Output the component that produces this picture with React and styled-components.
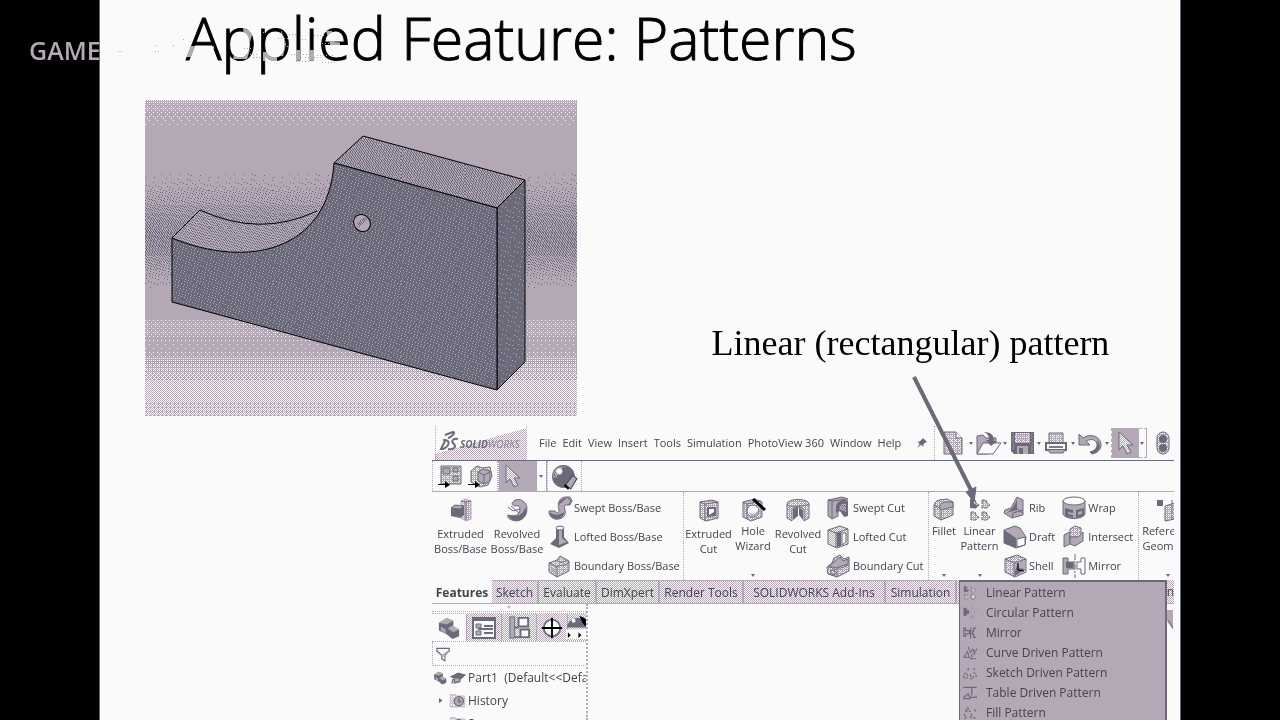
import React from "react";
import styled, { createGlobalStyle, css } from "styled-components";

const S = "#6a6a7a";
const M = "#b4a8b6";
const W = "#fafafa";
const K = "#000000";
const INK = "#45434f";
const MIX = "url(#mw32)";
const SOFT = "url(#mw20)";

const Global = createGlobalStyle`
  *, *::before, *::after { box-sizing: border-box; }
  body { margin: 0; background: #000; font-family: "Open Sans", "Noto Sans", sans-serif; }
  button, input { font: inherit; color: inherit; }
`;

const checker = css`
  background: repeating-conic-gradient(${M} 0 25%, ${W} 0 50%) 0 0 / 2px 2px;
`;

/* ---------- slide ---------- */

const Stage = styled.main`
  display: grid;
  grid-template-columns: 99px minmax(0, 1fr) 99px;
  height: 100vh;
  overflow: hidden;
  position: relative;
`;

const Slide = styled.section`
  grid-column: 2;
  background: ${W};
  display: flex;
  flex-direction: column;
  position: relative;
  overflow: hidden;
  border: 1px solid ${S};
  border-width: 0 1px;
`;

const Title = styled.h1`
  margin: 0;
  height: 100px;
  flex: none;
  padding-left: 86px;
  font-size: 59px;
  line-height: 74px;
  font-weight: 300;
  -webkit-text-stroke: 1px #000;
  color: #000;
  white-space: nowrap;
`;

const Watermark = styled.div`
  position: absolute;
  left: 29px;
  top: 32px;
  font-size: 25px;
  line-height: 36px;
  font-weight: 600;
  color: ${M};
`;

const WatermarkTrace = styled.svg`
  position: absolute;
  left: 0;
  top: 26px;
  mix-blend-mode: ${(p) => (p.$blend ? "lighten" : "normal")};
`;

const Figure = styled.div`
  display: flex;
  align-items: flex-end;
  padding-left: 45px;
  flex: none;
`;

const Render = styled.svg`
  display: block;
  flex: none;
`;

const Caption = styled.p`
  margin: 0 0 49px;
  flex: 1;
  padding-left: 64px;
  text-align: center;
  font-family: "Liberation Serif", serif;
  font-size: 36px;
  line-height: 48px;
  color: #000;
  white-space: nowrap;
`;

const Arrow = styled.svg`
  position: absolute;
  left: 806px;
  top: 370px;
  z-index: 5;
  pointer-events: none;
`;

/* ---------- application window ---------- */

const AppWindow = styled.div`
  margin: 10px 6px 0 332px;
  flex: 1;
  min-height: 0;
  display: flex;
  flex-direction: column;
  overflow: hidden;
  font-size: 12px;
  line-height: 16px;
  color: ${INK};
  white-space: nowrap;
`;

const MenuBar = styled.header`
  display: flex;
  height: 35px;
  flex: none;
  border-bottom: 1px solid ${S};
  font-size: 11px;
`;

const Logo = styled.svg`
  flex: none;
  margin-left: 3px;
`;

const Menus = styled.nav`
  display: flex;
  align-items: center;
  gap: 6px;
  padding-left: 12px;
  width: 383px;
  flex: none;
`;

const Plain = styled.button`
  border: 0;
  background: none;
  padding: 0;
  display: flex;
  align-items: center;
  justify-content: center;
  white-space: nowrap;
  flex: none;
`;

const PinButton = styled(Plain)`
  width: 24px;
`;

const QuickBar = styled.div`
  display: flex;
  align-items: center;
  flex: 1;
  min-width: 0;
  overflow: hidden;
  border-left: 1px dotted ${M};
  padding-left: 6px;
`;

const QuickButton = styled(Plain)`
  width: 34px;
  height: 30px;
  justify-content: flex-start;
  ${(p) =>
    p.$on &&
    css`
      width: 36px;
      margin-right: 6px;
      border: 1px dashed ${M};
      background: linear-gradient(to right, ${M} 27px, ${W} 27px);
    `}
`;

const Caret = styled.span`
  border: 2px solid transparent;
  border-top: 3px solid ${S};
  border-bottom: 0;
  margin-left: ${(p) => p.$gap || 0}px;
`;

const ToolRow = styled.div`
  display: flex;
  height: 31px;
  flex: none;
  border-bottom: 1px solid ${M};
`;

const ToolGroup = styled.div`
  display: flex;
  width: ${(p) => p.$w}px;
  flex: none;
  align-items: center;
  justify-content: ${(p) => (p.$on ? "flex-start" : "center")};
  gap: 4px;
  border: 1px dotted ${M};
  border-width: 0 1px;
  ${(p) => p.$on && css`background: linear-gradient(to right, ${M} 38px, ${W} 38px);`}
`;

const Ribbon = styled.div`
  display: flex;
  height: 88px;
  flex: none;
  position: relative;
  z-index: 2;
  font-size: 11px;
`;

const Group = styled.div`
  display: flex;
  flex: none;
  width: ${(p) => p.$w}px;
  border-right: 1px dotted ${M};
`;

const LastGroup = styled(Group)`
  flex: 1;
  width: auto;
  min-width: 0;
  overflow: hidden;
  border: 0;
  padding-left: 3px;
`;

const BigButton = styled.button`
  position: relative;
  width: ${(p) => p.$w}px;
  flex: none;
  height: 88px;
  border: 0;
  padding: 5px 0 0;
  background: none;
  display: flex;
  flex-direction: column;
  align-items: center;
  gap: ${(p) => (p.$menu ? 0 : 3)}px;
  line-height: 15px;
`;

const BigCaret = styled(Caret)`
  position: absolute;
  bottom: 3px;
`;

const Stack = styled.div`
  display: flex;
  flex-direction: column;
  padding-top: 1px;
  margin-left: ${(p) => p.$gap}px;
`;

const SmallButton = styled(Plain)`
  height: 29px;
  justify-content: flex-start;
  gap: 1px;
`;

const MenuAnchor = styled.div`
  position: relative;
`;

const Dropdown = styled.ul`
  position: absolute;
  top: 88px;
  left: 0;
  width: 208px;
  margin: 0;
  padding: 1px 0 2px;
  list-style: none;
  background: ${M};
  border: 2px solid ${S};
  border-left-width: 1px;
  z-index: 3;
  font-size: 12px;
`;

const DropItem = styled.button`
  display: flex;
  align-items: center;
  width: 100%;
  height: 20px;
  border: 0;
  padding: 0 0 0 2px;
  gap: 8px;
  background: none;
`;

const Tabs = styled.div`
  display: flex;
  height: 24px;
  flex: none;
  border-bottom: 1px solid ${M};
`;

const Tab = styled.button`
  width: ${(p) => p.$w}px;
  flex: none;
  padding: 2px 0 0;
  border: 0;
  background: none;
  text-align: center;
  ${(p) =>
    p.$on
      ? css`
          font-weight: 700;
        `
      : css`
          ${checker}
          border-top: 1px solid ${M};
          border-right: 2px solid ${M};
        `}
`;

const TabRest = styled.div`
  flex: 1;
  padding-top: 4px;
  text-align: right;
  ${checker}
`;

const Body = styled.div`
  display: flex;
  justify-content: space-between;
  flex: 1;
  min-height: 0;
`;

const Sidebar = styled.aside`
  width: 156px;
  overflow: hidden;
  border-right: 2px dotted ${M};
`;

const Splitter = styled.div`
  height: 8px;
  border-bottom: 1px dotted ${M};
  display: flex;
  justify-content: center;
`;

const PanelTabs = styled.div`
  display: flex;
  height: 29px;
  margin-top: 1px;
  border: 1px dotted ${M};
  border-width: 1px 0;
`;

const PanelTab = styled(Plain)`
  width: ${(p) => p.$w || 35}px;
  ${(p) => !p.$on && checker}
  border-right: 1px solid ${M};
`;

const Filter = styled.label`
  display: flex;
  align-items: center;
  height: 24px;
  padding-left: 2px;
  border: 1px dotted ${M};
  border-width: 0 0 1px 1px;
`;

const FilterInput = styled.input`
  border: 0;
  background: none;
  width: 120px;
  height: 20px;
  outline: 0;
`;

const Tree = styled.ul`
  margin: 0;
  padding: 0;
  list-style: none;
`;

const TreeRow = styled.li`
  display: flex;
  align-items: center;
  height: 23px;
  gap: 2px;
  white-space: pre;
  padding-left: ${(p) => (p.$nested ? 7 : 1)}px;
`;

const Twisty = styled.span`
  width: 5px;
  height: 5px;
  margin-right: 3px;
  border: 2px solid transparent;
  border-left: 3px solid ${(p) => (p.$hidden ? "transparent" : S)};
`;

/* ---------- dither tones ---------- */

function bayer(x, y) {
  let v = 0;
  for (let b = 0; b < 3; b++) {
    const xb = (x >> b) & 1;
    const yb = (y >> b) & 1;
    v = v * 4 + ((xb ^ yb) * 2 + yb);
  }
  return v;
}

function gradientNoise(x, y) {
  const a = 0.06711056 * x + 0.00583715 * y;
  const b = 52.9829189 * (a - Math.floor(a));
  return 64 * (b - Math.floor(b));
}

function Tone({ id, base, dot, level, size = 8, noise = bayer }) {
  let d = "";
  for (let y = 0; y < size; y++)
    for (let x = 0; x < size; x++) if (noise(x, y) < level) d += `M${x} ${y}h1v1h-1z`;
  return (
    <pattern id={id} width={size} height={size} patternUnits="userSpaceOnUse">
      <rect width={size} height={size} fill={base} />
      <path d={d} fill={dot} shapeRendering="crispEdges" />
    </pattern>
  );
}

const LEVELS = [2, 4, 6, 9, 12, 16, 20, 24, 28, 32];

const Hidden = styled.svg`
  position: absolute;
  width: 0;
  height: 0;
`;

const Tones = () => (
  <Hidden aria-hidden="true">
    <defs>
      {LEVELS.map((n) => (
        <React.Fragment key={n}>
          <Tone id={`mw${n}`} base={M} dot={W} level={n} />
          <Tone id={`ms${n}`} base={M} dot={S} level={n} size={64} noise={gradientNoise} />
        </React.Fragment>
      ))}
      <Tone id="sm7" base={S} dot={M} level={7} size={128} noise={gradientNoise} />
      <Tone id="sm3" base={S} dot={M} level={3} size={128} noise={gradientNoise} />
    </defs>
  </Hidden>
);

/* ---------- modelled part ---------- */

const BANDS = [
  [0, 3, "mw16"], [3, 14, "mw9"], [14, 20, "mw6"], [20, 28, "mw2"],
  [74, 82, "ms2"], [82, 89, "ms4"], [89, 97, "ms9"], [97, 105, "ms12"], [105, 113, "ms20"],
  [113, 121, "ms24"], [121, 130, "ms28"], [130, 148, "ms32"], [148, 156, "ms28"], [156, 163, "ms20"],
  [163, 170, "ms16"], [170, 177, "ms9"], [177, 184, "ms4"], [184, 188, "ms2"],
  [217, 221, "mw4"], [221, 235, "mw9"], [235, 242, "mw4"], [242, 252, "mw2"],
  [252, 258, "mw6"], [258, 265, "mw16"], [265, 273, "mw20"], [273, 281, "mw24"],
  [281, 300, "mw32"], [300, 316, "mw28"],
];

const PartRender = () => (
  <Render width="432" height="316" viewBox="0 0 432 316" role="img" aria-label="Solid part with a hole">
    <rect width="432" height="316" fill={M} />
    {BANDS.map(([a, b, t]) => (
      <rect key={a} y={a} width="432" height={b - a} fill={`url(#${t})`} />
    ))}
    <path d="M27 138L55 110Q115 138 172 111L176 110C146 156 92 164 27 138Z" fill="url(#ms20)" />
    <g stroke={K} strokeWidth="1" strokeLinejoin="round">
      <path d="M27 138L55 110Q115 138 172 111" fill="none" />
      <path d="M189 63L218 36L380 80L352 108Z" fill="url(#ms28)" />
      <path d="M352 108L380 80V262L352 290Z" fill="url(#sm3)" />
      <path d="M27 138C102 169 183 152 189 63L352 108V290L27 202Z" fill="url(#sm7)" />
      <ellipse cx="217" cy="123" rx="8" ry="9" fill={M} transform="rotate(-40 217 123)" />
    </g>
    <path d="M212 123l7-6 4 2-10 9z" fill="url(#ms32)" />
  </Render>
);

/* ---------- icons ---------- */

const ICONS = {
  extrude: (<><path d="M12 3l4-2 6 2v18l-5 2-5-3z" fill={SOFT} stroke={M} /><path d="M17 4v18M12 3l5 1 5-1" stroke={S} fill="none" /><path d="M2 10l4-3 9 1v9l-4 3-9-2z" fill={S} /><path d="M2 10l4-3 9 1-4 3z" fill={M} stroke={S} /></>),
  revolve: (<><path d="M9 3c5-4 13 0 13 8 0 9-8 14-15 11-4-1-5-4-4-5 7 2 12 0 12-6 0-3-3-4-6-3-2-1-3-3 0-5z" fill={M} stroke={S} /><path d="M4 17c8 3 15-1 16-8 4 8-3 16-12 13-3-1-5-3-4-5z" fill={S} /><path d="M3 9l5 4 7-2M6 8l8 7" stroke={S} /></>),
  sweep: (<><path d="M1 15h6c1 3 5 2 4-1C9 8 11 1 18 1h4l2 4-2 4h-4c-2 0-2 2-1 5 2 7-5 10-10 9-4-1-6-4-6-8z" fill={M} stroke={S} /><path d="M1 16c4 3 10 4 15 0 0 8-13 10-15 0zM11 9c0-4 3-7 8-7l-5 4z" fill={S} /><path d="M19 1l4 4-3 4" stroke={S} fill="none" /></>),
  loft: (<><path d="M8 3v10l-6 6 9 4 10-5-5-6V3z" fill={S} /><path d="M11 4v16l8-3-5-4V4z" fill={M} /><ellipse cx="12" cy="3" rx="4" ry="2" fill={W} stroke={S} /></>),
  boundary: (<><path d="M1 9l8-3 3-4 9 5v10l-12 6-8-5z" fill={SOFT} stroke={S} /><path d="M1 9l8 4v10M9 13c3-3 8 0 12-5M9 6c2 3 6 3 10 0" stroke={S} fill="none" /><path d="M4 13v4l3 2v-4z" fill={M} /></>),
  extrudeCut: (<><path d="M3 4l12-2 6 2v16l-12 3-6-3z" fill={SOFT} stroke={S} /><path d="M3 4l5 2v17M8 6l13-2" stroke={S} fill="none" /><path d="M10 9h9v9l-9 1z" fill={S} /><path d="M12 11h5v3l-5 3z" fill={W} /></>),
  hole: (<><path d="M2 4l12-3 7 3v15l-11 4-8-4z" fill={SOFT} stroke={S} /><path d="M2 4l4 2v15M6 6l14-3" stroke={S} /><circle cx="12" cy="13" r="6" fill={W} stroke={S} /><path d="M8 14q5 5 9-2c3 8-8 9-9 2z" fill={M} /><path d="M12 1l12 11" stroke={K} strokeWidth="3" /></>),
  revolveCut: (<><path d="M1 6C1 0 23 0 23 6v14l-5 3V12c-1-4-11-4-12 0v11l-5-3z" fill={SOFT} stroke={S} /><path d="M7 22V11l5-2v9zM17 22l-4-5V9l4 3z" fill={S} /><path d="M1 6c3 4 6 2 8 3 3-2 8 0 14-3" stroke={S} fill="none" /></>),
  sweptCut: (<><path d="M1 4l14-3 6 2-3 4-7 5v8l-6 3-4-3z" fill={M} stroke={S} /><path d="M9 10c2-6 8-7 12-5v15l-4 1-4-6-4 2z" fill={S} /><path d="M12 12c1-4 4-5 7-4v8l-5-2z" fill="url(#ms16)" /><path d="M1 4l4 1v17M5 5l14-2" stroke={S} fill="none" /></>),
  loftCut: (<><path d="M1 5l12-4 8 3v15l-11 4-9-4z" fill={MIX} stroke={S} /><path d="M1 5l8 3v15M9 8l12-4" stroke={S} fill="none" /><path d="M10 8l4-1v14l-4 1z" fill={S} /><path d="M15 8h4v9l-4 3z" fill={W} stroke={S} /></>),
  boundaryCut: (<><path d="M0 13l5-4 2-5 6-3 4 4 5-2v14l-12 6-9-3z" fill={SOFT} stroke={S} /><path d="M7 8l6-5 3 4 5-2v5l-12 4-7-2z" fill={M} stroke={S} /><path d="M1 14c4-3 5 3 9 1s4 0 11-4M4 16v4l4 1v-4zM10 16v6" stroke={S} fill="none" /></>),
  fillet: (<><path d="M2 7q1-4 5-5l8-1 6 3v13l-12 5-7-4z" fill={SOFT} stroke={S} /><path d="M2 7l7 4v11M9 11q1-5 6-6l6-1" stroke={S} fill="none" /><path d="M7 9q2-5 8-5h6v5l-12 3z" fill={M} stroke={S} /></>),
  linear: (<><path d="M3 2v8h5l3-3-3-2-1-3zM3 14v8h5l3-3-3-2-1-3zM14 2v8h5l3-3-3-2-1-3zM14 14v8h5l3-3-3-2-1-3z" fill={SOFT} stroke={S} strokeDasharray="4 1" /><path d="M2 1h4v9H2zM6 6l4 1-2 3H5z" fill={S} /></>),
  rib: (<><path d="M14 1l6 3v15l-11 3-8-5 1-3 6-2z" fill={M} stroke={S} /><path d="M14 3v11l-11 3q8-4 11-14z" fill={S} /><path d="M14 13l6 4M9 22l1-5 10-3" stroke={S} fill="none" /></>),
  draft: (<><path d="M1 5l11-4 5 2 6 9-1 8-9 3-12-5z" fill={M} stroke={S} /><path d="M1 5l12 8v10L1 18z" fill={S} /><path d="M14 14l8-2v8l-8 2z" fill={W} stroke={S} /></>),
  shell: (<><path d="M2 5l12-4 9 4v13l-11 5-10-5z" fill={SOFT} stroke={S} /><path d="M2 5l9 4v14M11 9l12-4" stroke={S} fill="none" /><path d="M12 9l10-3v11l-10 5z" fill={M} /><path d="M12 18l3-10 1 6 6 1-10 7z" fill={S} /><path d="M15 9v7l6 1" stroke={K} fill="none" /></>),
  wrap: (<><path d="M1 5v13c2 6 20 6 22 0V5z" fill={M} stroke={S} /><ellipse cx="12" cy="5" rx="11" ry="4" fill={W} stroke={S} /><path d="M3 12l8 2v3l-5-1v2l5 1v3l-8-2zM14 14l8-2v8l-8 2z" fill={S} /><path d="M16 16l4-1v3l-4 1z" fill={M} /></>),
  intersect: (<><path d="M2 10l6-3v12l-6 3z" fill={M} stroke={S} /><path d="M8 4l5-3 6 2v10l-5 3-6-2z" fill={SOFT} stroke={S} /><path d="M8 12h8l5-5v9l-8 5-5-2z" fill={M} stroke={S} /></>),
  mirror: (<><path d="M1 4h5v4h6v7H6v5H1z" fill={M} stroke={S} /><path d="M4 8h7v6H4z" fill={S} /><path d="M23 4h-4v4h-4v7h4v5h4z" fill={W} stroke={S} /><path d="M13 0v24" stroke={S} strokeDasharray="6 1 2 1" /></>),
  refgeo: (<><path d="M1 2h6v6H1z" fill={S} /><path d="M9 8l10-3v16l-10 2z" fill={SOFT} stroke={S} /><path d="M16 2v20" stroke={S} strokeDasharray="4 1" /></>),
  newDoc: (<><path d="M2 1h12l6 6v16H2z" fill="url(#mw20)" stroke={S} /><path d="M14 1v6h6" stroke={S} fill={W} /></>),
  open: (<><path d="M1 5l6-1 3 3h10v4l-8 12H1z" fill={M} stroke={S} /><path d="M1 23l6-11h18l-8 11z" fill={W} stroke={S} /><path d="M8 1c8 0 10 4 10 9h3l-6 5-5-6h3c0-4-1-6-5-8z" fill={S} /></>),
  save: (<><path d="M1 1h23v22H4l-3-3z" fill={S} /><path d="M5 2h15v10H5z" fill={SOFT} /><path d="M7 5h11M7 8h11" stroke={M} /><path d="M3 2v17M22 2v20" stroke="url(#ms32)" /><path d="M7 15h11v8H7z" fill={M} /><path d="M9 17h4v6H9z" fill={S} /></>),
  print: (<><path d="M5 2h14v10H5z" fill={SOFT} stroke={S} /><path d="M2 12h20v7H2z" fill={W} stroke={S} strokeWidth="2" /><path d="M5 16h14" stroke={K} /><path d="M4 19l2 3h13l2-3" fill={M} stroke={S} /></>),
  undo: (<><path d="M1 3v11h11L8 10c6-3 11-1 11 4 0 4-3 6-7 7l2 2c5-1 9-4 9-9 0-9-11-12-18-7z" fill={M} stroke={S} /><path d="M19 9c5 5 3 12-5 14l-2-2c6-2 9-6 7-12z" fill={S} /></>),
  cursor: (<path d="M6 1v18l4-4 4 8 4-2-4-7h6z" fill={MIX} stroke={S} />),
  light: (<><rect x="3" y="1" width="12" height="22" rx="6" fill={SOFT} stroke={S} /><circle cx="9" cy="8" r="4" fill={S} /><circle cx="9" cy="17" r="4" fill={S} /></>),
  layout: (<><path d="M3 2h20v18H3z" fill={SOFT} stroke={S} /><path d="M5 4h7v6H5zM15 4h5v4h-5zM15 12h5v5h-5z" fill={M} stroke={S} /><path d="M0 20h7v-3l5 4-5 3v-3H0z" fill={K} /></>),
  boxes: (<><path d="M3 7l6-5 5 2 8-1 2 9-4 9-8 2-9-5z" fill={SOFT} stroke={S} /><path d="M10 8l5-3 7 2v10l-6 3-6-3z" fill={M} stroke={S} /><path d="M10 8l6 3v9M16 11l6-3" stroke={S} fill="none" /><path d="M0 20h7v-3l5 4-5 3v-3H0z" fill={K} /></>),
  sphere: (<><circle cx="11" cy="12" r="11" fill={S} /><path d="M1 13c0-9 8-12 13-11-6 2-9 6-9 11z" fill="url(#ms16)" /><circle cx="7" cy="7" r="3" fill={W} /><path d="M13 20l7-9 4 3-6 10z" fill={M} stroke={INK} /><path d="M12 20l4 4" stroke={K} strokeWidth="2" /></>),
  part: (<><path d="M1 7l8-5 7 3v6l6 3v7l-7 3-6-5-8-4z" fill={S} /><path d="M1 7l8-5 7 3-7 4zM10 13l5-3 7 4-6 3z" fill={M} /><path d="M3 11l5 3v4l-5-3z" fill={M} /></>),
  list: (<><path d="M1 2h22v20H1z" fill={W} stroke={S} strokeWidth="2" /><path d="M1 2h22v3H1z" fill={S} /><path d="M4 8h5v4H4zM4 15h5v4H4z" fill={M} stroke={S} /><path d="M12 10h9M12 17h9M6 13h15" stroke={S} strokeWidth="2" /></>),
  config: (<><path d="M5 2v20h8M5 12h6" stroke={S} fill="none" strokeWidth="2" /><path d="M2 1h5v22H2z" fill={M} stroke={S} /><path d="M11 2h10v9H11zM13 14h9v8h-9z" fill={W} stroke={S} strokeWidth="2" /></>),
  target: (<><circle cx="12" cy="12" r="9" fill={W} stroke={S} strokeWidth="2" /><path d="M12 1v22M1 12h22" stroke={K} strokeWidth="2" /></>),
  dome: (<><path d="M1 12C2 0 22-2 23 12z" fill={S} /><path d="M14 0c8 2 9 6 9 12-4-1-7-6-9-12z" fill={K} /><circle cx="8" cy="5" r="2" fill={W} /><path d="M0 14h24v10H0z" fill={W} /><path d="M2 17l3 3-3 3zM13 17l3 3-3 3z" fill={K} /></>),
  funnel: (<><path d="M2 3h20v4l-7 7v9l-5-3v-6L2 7z" fill={W} stroke={S} strokeWidth="2" /><path d="M11 13l8-6h3l-7 7v9z" fill={M} /></>),
  cap: (<><path d="M0 10l12-6 12 3-9 8z" fill={S} stroke={INK} /><path d="M6 13v7l9-2v-5M4 13l-2 8" fill={M} stroke={S} strokeWidth="2" /></>),
  history: (<><path d="M1 3h8l2 2h12v17H1z" fill={MIX} stroke={M} /><circle cx="14" cy="13" r="7" fill={M} stroke={S} strokeWidth="2" /><path d="M14 9v5h4" stroke={S} fill="none" strokeWidth="2" /></>),
  pin: (<path d="M14 1l9 9-4 1-4 4v5l-5-4-9 7 6-9-5-5h5l5-5z" fill={S} />),
  mCircular: (<path d="M2 4v12h4v-3h4V8H6V4zM14 4h3M19 9v3M18 17h-4M12 20h3M21 5h2" fill={S} stroke={S} />),
  mMirror: (<path d="M2 4v13h3v-4h6V8H5V4zM13 3v18M22 4h-4v5h-2v5h2v5h4" fill="none" stroke={S} strokeWidth="2" />),
  mCurve: (<path d="M2 19h9l-3-9-3 4zM9 2l4 9 4-6 2 8 4-8M15 14v8M12 21h9" fill="none" stroke={S} strokeWidth="2" strokeDasharray="5 1" />),
  mSketch: (<path d="M2 20v-6l3-2 3 3v5zM13 14v7h4v-4M9 4v4M19 4v4M18 11l4 4v5" fill="none" stroke={S} strokeWidth="2" strokeDasharray="4 2" />),
  mTable: (<path d="M1 3h22M1 20l8-7 3 6h10v-3M15 3v13M1 21h12" fill="none" stroke={S} strokeWidth="2" />),
  mFill: (<path d="M5 9l3-6 4 6zM2 14l4 4-3 4M13 13l3 3-5 5M19 6l3 4M17 20h5" fill="none" stroke={S} strokeWidth="2" strokeDasharray="4 2" />),
};

const IconSvg = styled.svg`
  flex: none;
`;

const Icon = ({ name, size = 24 }) => (
  <IconSvg width={size} height={size} viewBox="-1 -1 26 26" fill="none" aria-hidden="true">
    {ICONS[name]}
  </IconSvg>
);

/* ---------- pieces ---------- */

const Big = ({ icon, lines, w, menu }) => (
  <BigButton $w={w} $menu={menu}>
    <Icon name={icon} size={26} />
    <span>
      {lines.map((l, i) => (
        <React.Fragment key={l}>
          {i > 0 && <br />}
          {l}
        </React.Fragment>
      ))}
    </span>
    {menu && <BigCaret />}
  </BigButton>
);

const Smalls = ({ items, gap }) => (
  <Stack $gap={gap}>
    {items.map(([icon, label]) => (
      <SmallButton key={label}>
        <Icon name={icon} size={26} />
        {label}
      </SmallButton>
    ))}
  </Stack>
);

const MENUS = ["File", "Edit", "View", "Insert", "Tools", "Simulation", "PhotoView 360", "Window", "Help"];
const QUICK = ["newDoc", "open", "save", "print", "undo"];
const TABS = [["Features", 60], ["Sketch", 47], ["Evaluate", 58], ["DimXpert", 63], ["Render Tools", 84], ["SOLIDWORKS Add-Ins", 142], ["Simulation", 71]];
const PATTERNS = [
  ["linear", "Linear Pattern"], ["mCircular", "Circular Pattern"], ["mMirror", "Mirror"],
  ["mCurve", "Curve Driven Pattern"], ["mSketch", "Sketch Driven Pattern"],
  ["mTable", "Table Driven Pattern"], ["mFill", "Fill Pattern"],
];

const SolidLogo = () => (
  <Logo width="92" height="34" viewBox="0 0 92 34" role="img" aria-label="SolidWorks">
    <path d="M0 34V28L92 2V34Z" fill="url(#mw32)" />
    <path d="M.5 0v34M91.500 0v34" stroke={M} strokeDasharray="1 1" />
    <g fill="none" stroke={S} strokeWidth="2">
      <path d="M10 9l8-3c3 0-1 5-5 6M8 14c8-1 7 6 0 9l-2 0 4-8M23 13c-6-1-7 3-4 5 3 3-1 6-6 5" />
    </g>
    <text x="25" y="22" fontFamily="Open Sans, sans-serif" fontSize="10" fontWeight="700" fontStyle="italic" fill={S}>
      SOLID<tspan fill="#8a8092" fontWeight="400">WORKS</tspan>
    </text>
  </Logo>
);

export default function App() {
  return (
    <Stage>
      <Global />
      <Tones />
      <Slide>
        <Title>Applied Feature: Patterns</Title>
        <WatermarkTrace $blend width="240" height="40" viewBox="0 0 240 40" aria-hidden="true">
          <path d="M86 20h28v11H86zM143 2l10 4-3 10-6-4zM138 14l12 10-3 9h-14zM163 26h14v9h-14zM181 4l5 14-3 12h-14l4-8 8-2zM195 24h5v10h-5zM209 24h7v10h-7zM226 5l8 26h12v-14l-12-1-2-11z" fill={M} />
        </WatermarkTrace>
        <WatermarkTrace width="240" height="40" viewBox="0 0 240 40" aria-hidden="true">
          <path d="M18 25.500h5M55 25.500h5M56 19.500h1M73 19.500h1M83 13.500h1M144 22.500h7M147 28.500h12M153 31.500h7M163 6.500h3M168 33.500h9M178 12.500h10M187 20.500h2M189 8.500h7M191 28.500h18M196 35.500h14M202 13.500h6M205 31.500h16M214 9.500h10M217 29.500h16M222 17.500h7M222 36.500h14" stroke={M} strokeDasharray="1 2" />
        </WatermarkTrace>
        <Figure>
          <PartRender />
          <Caption>Linear (rectangular) pattern</Caption>
        </Figure>
        <Arrow width="80" height="136" viewBox="0 0 80 136" aria-hidden="true">
          <path d="M8 7L65 120" stroke={S} strokeWidth="4" />
          <path d="M60 122L68 132L70 117Z" fill={S} stroke={S} />
        </Arrow>

        <AppWindow>
          <MenuBar>
            <SolidLogo />
            <Menus>
              {MENUS.map((m) => (
                <Plain key={m}>{m}</Plain>
              ))}
            </Menus>
            <PinButton aria-label="Pin menu">
              <Icon name="pin" size={12} />
            </PinButton>
            <QuickBar>
              {QUICK.map((q) => (
                <QuickButton key={q} aria-label={q}>
                  <Icon name={q} size={26} />
                  <Caret $gap={2} />
                </QuickButton>
              ))}
              <QuickButton $on aria-label="Select">
                <Icon name="cursor" size={26} />
                <Caret $gap={2} />
              </QuickButton>
              <QuickButton aria-label="Rebuild">
                <Icon name="light" size={26} />
              </QuickButton>
            </QuickBar>
          </MenuBar>

          <ToolRow>
            <ToolGroup $w={66}>
              <Plain aria-label="Layout"><Icon name="layout" size={26} /></Plain>
              <Plain aria-label="Assembly"><Icon name="boxes" size={26} /></Plain>
            </ToolGroup>
            <ToolGroup $w={49} $on>
              <Plain aria-label="Select tool"><Icon name="cursor" size={26} /></Plain>
              <Caret $gap={10} />
            </ToolGroup>
            <ToolGroup $w={35}>
              <Plain aria-label="Appearance"><Icon name="sphere" size={27} /></Plain>
            </ToolGroup>
          </ToolRow>

          <Ribbon>
            <Group $w={252}>
              <Big icon="extrude" lines={["Extruded", "Boss/Base"]} w={57} />
              <Big icon="revolve" lines={["Revolved", "Boss/Base"]} w={56} />
              <Smalls gap={2} items={[["sweep", "Swept Boss/Base"], ["loft", "Lofted Boss/Base"], ["boundary", "Boundary Boss/Base"]]} />
            </Group>
            <Group $w={245}>
              <Big icon="extrudeCut" lines={["Extruded", "Cut"]} w={49} />
              <Big icon="hole" lines={["Hole", "Wizard"]} w={40} menu />
              <Big icon="revolveCut" lines={["Revolved", "Cut"]} w={50} />
              <Smalls gap={3} items={[["sweptCut", "Swept Cut"], ["loftCut", "Lofted Cut"], ["boundaryCut", "Boundary Cut"]]} />
            </Group>
            <Group $w={210}>
              <Big icon="fillet" lines={["Fillet"]} w={30} menu />
              <MenuAnchor>
                <Big icon="linear" lines={["Linear", "Pattern"]} w={41} menu />
                <Dropdown>
                  {PATTERNS.map(([icon, label]) => (
                    <li key={label}>
                      <DropItem>
                        <Icon name={icon} size={16} />
                        {label}
                      </DropItem>
                    </li>
                  ))}
                </Dropdown>
              </MenuAnchor>
              <Smalls gap={2} items={[["rib", "Rib"], ["draft", "Draft"], ["shell", "Shell"]]} />
              <Smalls gap={6} items={[["wrap", "Wrap"], ["intersect", "Intersect"], ["mirror", "Mirror"]]} />
            </Group>
            <LastGroup>
              <Big icon="refgeo" lines={["Reference", "Geometry"]} w={52} menu />
            </LastGroup>
          </Ribbon>

          <Tabs>
            {TABS.map(([label, w], i) => (
              <Tab key={label} $w={w} $on={i === 0}>{label}</Tab>
            ))}
            <TabRest>n</TabRest>
          </Tabs>

          <Body>
            <Sidebar>
              <Splitter>
                <svg width="4" height="6" aria-hidden="true"><circle cx="2" cy="3" r="1" stroke={M} fill="none" /></svg>
              </Splitter>
              <PanelTabs>
                <PanelTab $on aria-label="Feature tree"><Icon name="part" size={25} /></PanelTab>
                <PanelTab aria-label="Properties"><Icon name="list" size={26} /></PanelTab>
                <PanelTab aria-label="Configurations"><Icon name="config" size={25} /></PanelTab>
                <PanelTab $w={31} aria-label="Dimensions"><Icon name="target" size={24} /></PanelTab>
                <PanelTab $w={20} aria-label="Display"><Icon name="dome" size={25} /></PanelTab>
              </PanelTabs>
              <Filter>
                <Icon name="funnel" size={16} />
                <FilterInput aria-label="Filter" />
              </Filter>
              <Tree>
                <TreeRow>
                  <Icon name="part" size={15} />
                  <Icon name="cap" size={16} />
                  {"Part1  (Default<<Default>_Display State 1>)"}
                </TreeRow>
                <TreeRow $nested>
                  <Twisty />
                  <Icon name="history" size={17} />
                  History
                </TreeRow>
                <TreeRow $nested>
                  <Twisty $hidden />
                  <Icon name="history" size={17} />
                  Sensors
                </TreeRow>
              </Tree>
            </Sidebar>
            <svg width="8" height="28" viewBox="0 0 8 28" aria-hidden="true">
              <path d="M1 6h6v20l-6-9z" fill={M} />
              <path d="M2 16l5 8" stroke={S} />
            </svg>
          </Body>
        </AppWindow>
      </Slide>
      <Watermark>GAME</Watermark>
    </Stage>
  );
}
